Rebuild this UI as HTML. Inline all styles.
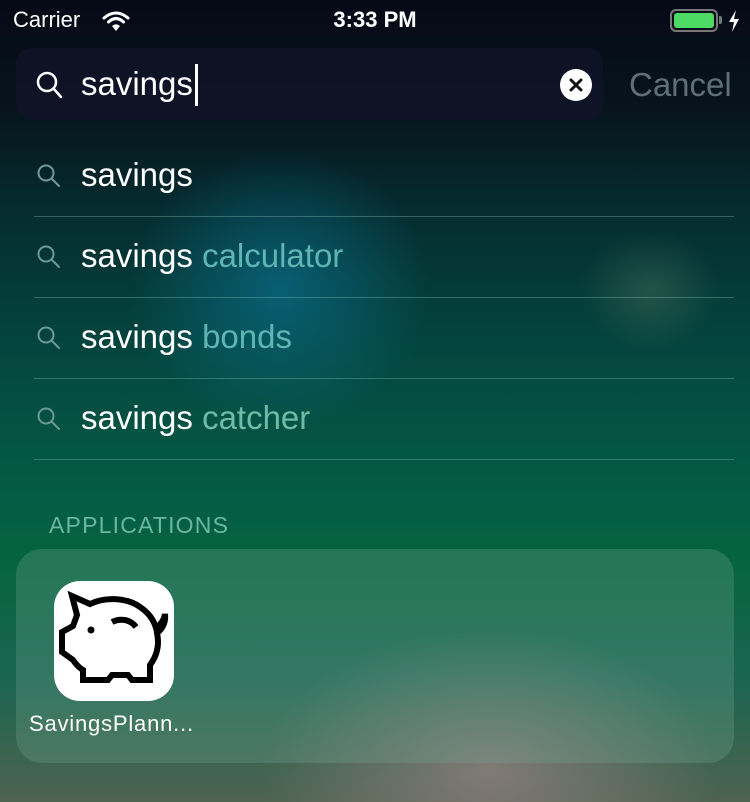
<!DOCTYPE html>
<html><head><meta charset="utf-8"><style>
*{margin:0;padding:0;box-sizing:border-box}
body{width:750px;height:802px;overflow:hidden;position:relative;font-family:"Liberation Sans",sans-serif;
background:
radial-gradient(ellipse 150px 140px at 280px 290px,rgba(10,110,140,.7),rgba(10,110,140,0)),
radial-gradient(ellipse 70px 60px at 650px 290px,rgba(80,120,100,.4),rgba(80,120,100,0)),
radial-gradient(ellipse 230px 140px at 490px 770px,rgba(150,130,130,.75),rgba(150,130,130,0)),
linear-gradient(180deg,#050a16 0px,#07141c 110px,#052a2e 200px,#04463f 350px,#045a45 480px,#05643f 560px,#1b6550 680px,#4e6350 802px);}
.abs{position:absolute}
.search{left:16px;top:48px;width:587px;height:72px;border-radius:16px;background:rgba(20,20,45,.6)}
.row{left:81px;font-size:33px;color:#fff}
.row span{color:#5eb6b3}
.line{left:34px;width:700px;height:1px;background:rgba(110,170,160,.45)}
.mg{left:36px}
.card{left:16px;top:549px;width:718px;height:214px;border-radius:26px;background:rgba(120,170,150,.28)}
</style></head><body>
<div class="abs" style="left:13px;top:7px;color:#fff;font-size:22px">Carrier</div>
<svg class="abs" style="left:102px;top:10px" width="28" height="22" viewBox="0 0 28 22"><path d="M2 8 Q14 -2 26 8" stroke="#fff" stroke-width="3" fill="none" stroke-linecap="round"/><path d="M6.5 12 Q14 5 21.5 12" stroke="#fff" stroke-width="3" fill="none" stroke-linecap="round"/><path d="M10 16 L14 21 L18 16 Q14 12.5 10 16Z" fill="#fff"/></svg>
<div class="abs" style="left:0;width:750px;text-align:center;top:7px;color:#fff;font-size:22px;font-weight:bold">3:33 PM</div>
<div class="abs" style="left:670px;top:9px;width:48px;height:23px;border:2px solid #777;border-radius:6px;padding:2px"><div style="width:100%;height:100%;background:#4cd964;border-radius:3px"></div></div>
<div class="abs" style="left:719px;top:16px;width:3px;height:8px;background:#777;border-radius:0 2px 2px 0"></div>
<svg class="abs" style="left:728px;top:10px" width="12" height="22" viewBox="0 0 12 22"><path d="M8 0 L1 12 H6 L4 22 L11 9 H6 Z" fill="#fff"/></svg>

<div class="abs search"></div>
<svg class="abs" style="left:35px;top:70px" width="32" height="32" viewBox="0 0 32 32"><circle cx="12" cy="12" r="9" stroke="#fff" stroke-width="2.5" fill="none"/><path d="M18.5 18.5 L26 27" stroke="#fff" stroke-width="2.5" stroke-linecap="round"/></svg>
<div class="abs" style="left:81px;top:65px;color:#fff;font-size:33px">savings</div>
<div class="abs" style="left:195px;top:64px;width:3px;height:42px;background:#fff"></div>
<svg class="abs" style="left:559px;top:68px" width="34" height="34" viewBox="0 0 34 34"><circle cx="17" cy="17" r="16" fill="#fff"/><path d="M12 12 L22 22 M22 12 L12 22" stroke="#111" stroke-width="3" stroke-linecap="round"/></svg>
<div class="abs" style="left:629px;top:66px;color:#5f6f78;font-size:33px">Cancel</div>

<svg width="0" height="0" style="position:absolute"><defs><g id="mg"><circle cx="10" cy="10" r="7.5" stroke="#6e9a96" stroke-width="2" fill="none"/><path d="M15.5 15.5 L23 23" stroke="#6e9a96" stroke-width="2" stroke-linecap="round"/></g></defs></svg>
<svg class="abs mg" style="top:163px" width="26" height="26"><use href="#mg"/></svg>
<div class="abs row" style="top:156px">savings</div>
<div class="abs line" style="top:216px"></div>
<svg class="abs mg" style="top:244px" width="26" height="26"><use href="#mg"/></svg>
<div class="abs row" style="top:237px">savings <span>calculator</span></div>
<div class="abs line" style="top:297px"></div>
<svg class="abs mg" style="top:325px" width="26" height="26"><use href="#mg"/></svg>
<div class="abs row" style="top:318px">savings <span>bonds</span></div>
<div class="abs line" style="top:378px"></div>
<svg class="abs mg" style="top:406px" width="26" height="26"><use href="#mg"/></svg>
<div class="abs row" style="top:399px">savings <span style="color:#6cbda6">catcher</span></div>
<div class="abs line" style="top:459px"></div>

<div class="abs" style="left:49px;top:512px;font-size:23px;letter-spacing:1.2px;color:#6cb59e">APPLICATIONS</div>
<div class="abs card"></div>
<div class="abs" style="left:54px;top:581px;width:120px;height:120px;border-radius:26px;background:#fff"></div>
<svg class="abs" style="left:54px;top:581px" width="120" height="120" viewBox="0 0 120 120">
<path d="M18 15 L36 23 C50 16 72 16 86 26 C95 32 100 40 102 47 C106 44 110 40 111 33 C112 42 108 48 103 52 C106 66 102 76 96 84 L96 99 L78 99 L74 94 L58 94 L54 99 L29 99 L29 89 C24 86 21 82 19 79 L8 71 L8 51 L19 45 L23 34 Z" fill="none" stroke="#000" stroke-width="6" stroke-linejoin="miter"/>
<path d="M58 41 C66 37 76 38 82 46" stroke="#000" stroke-width="6" fill="none"/>
<circle cx="37" cy="49" r="3.5" fill="#000"/>
</svg>
<div class="abs" style="left:29px;top:711px;color:#fff;font-size:22px;letter-spacing:0.8px">SavingsPlann...</div>
</body></html>
